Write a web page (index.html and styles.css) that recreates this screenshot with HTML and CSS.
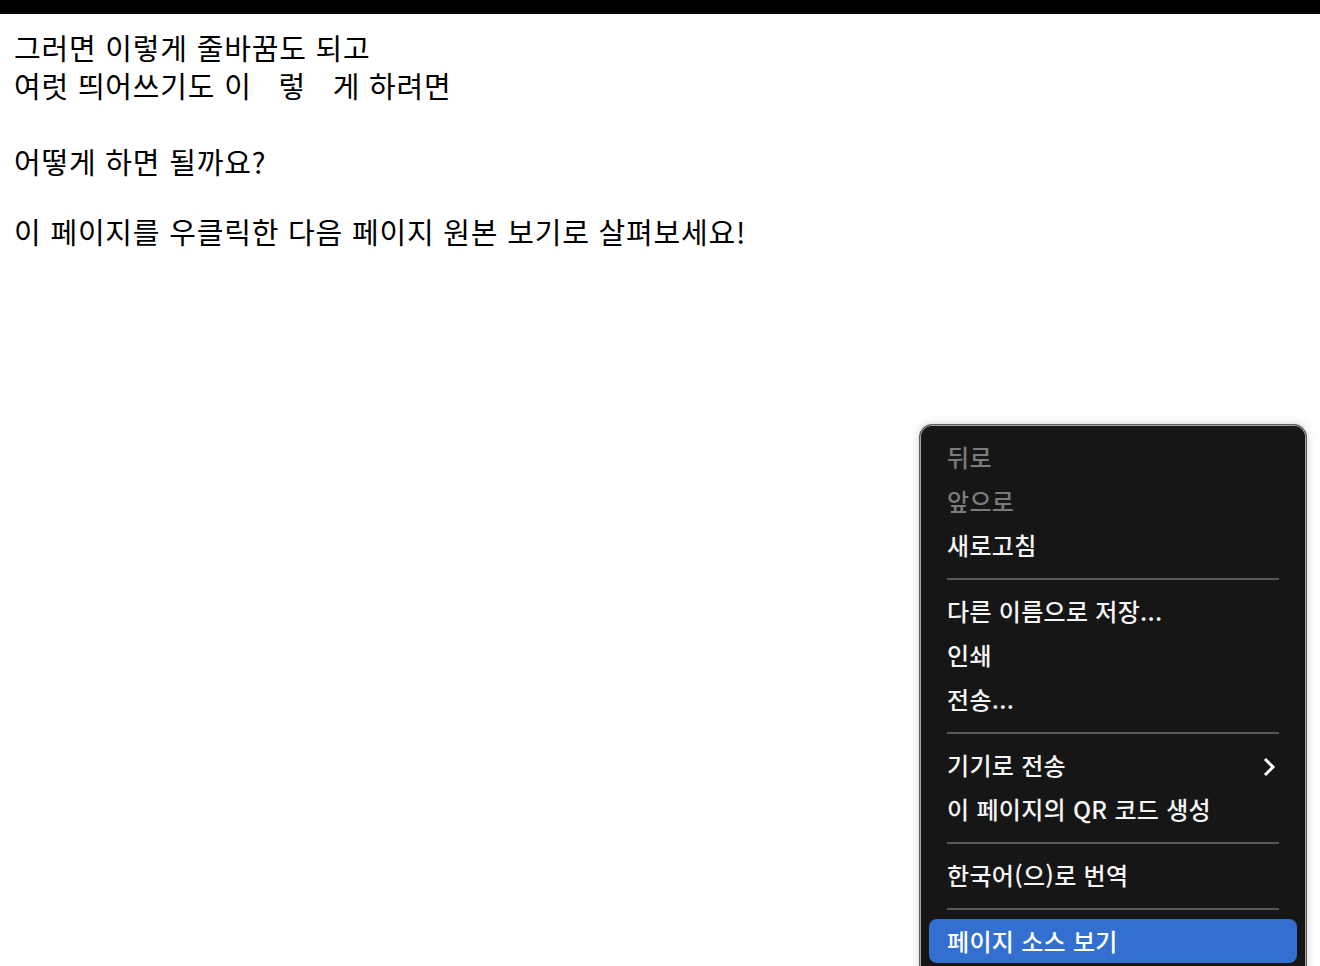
FILE: index.html
```html
<!DOCTYPE html>
<html lang="ko">
<head>
    <meta charset="UTF-8">
    <meta name="viewport" content="width=device-width, initial-scale=1.0">
    <title>줄바꿈과 띄어쓰기</title>
    <link rel="stylesheet" href="styles.css">
</head>
<body>

    <div class="topbar"></div>

    <div class="page">
        <p class="lines">그러면 이렇게 줄바꿈도 되고<br>여럿 띄어쓰기도 이&nbsp;&nbsp;&nbsp;렇&nbsp;&nbsp;&nbsp;게 하려면</p>
        <p class="question">어떻게 하면 될까요?</p>
        <p class="hint">이 페이지를 우클릭한 다음 페이지 원본 보기로 살펴보세요!</p>
    </div>

    <div class="context-menu">
        <div class="menu-item disabled">뒤로</div>
        <div class="menu-item disabled">앞으로</div>
        <div class="menu-item">새로고침</div>
        <div class="menu-sep"></div>
        <div class="menu-item">다른 이름으로 저장...</div>
        <div class="menu-item">인쇄</div>
        <div class="menu-item">전송...</div>
        <div class="menu-sep"></div>
        <div class="menu-item has-sub">기기로 전송
            <svg class="chevron" width="14" height="20" viewBox="0 0 14 20">
                <path d="M3 2 L11 10 L3 18" fill="none" stroke="#fff" stroke-width="3"/>
            </svg>
        </div>
        <div class="menu-item">이 페이지의 QR 코드 생성</div>
        <div class="menu-sep"></div>
        <div class="menu-item">한국어(으)로 번역</div>
        <div class="menu-sep"></div>
        <div class="menu-item active">페이지 소스 보기</div>
    </div>

</body>
</html>
```

FILE: styles.css
```css
html, body {
    height: 100%;
}

body {
    margin: 0;
    font-family: "Noto Sans CJK KR", "Noto Sans", sans-serif;
    color: #000;
    background-color: #fff;
    overflow: hidden;
    position: relative;
}

.topbar {
    height: 14px;
    background-color: #000;
}

.page {
    padding: 14px 14px 0;
    font-size: 29px;
    line-height: 38px;
    letter-spacing: 0.8px;
}

.page p {
    margin: 0;
}

.question {
    margin-top: 38px !important;
}

.hint {
    margin-top: 32px !important;
}

.context-menu {
    position: absolute;
    left: 919px;
    top: 424px;
    width: 386px;
    padding: 10px 0 20px;
    background-color: #161616;
    border: 1px solid #5e5e5e;
    border-radius: 13px;
    box-shadow: inset 0 0 0 1px #a2a2a2, 0 0 10px rgba(0, 0, 0, 0.18);
    font-size: 24px;
    font-weight: 500;
    letter-spacing: 0.3px;
    color: #f4f4f4;
}

.menu-item {
    height: 44px;
    line-height: 44px;
    margin: 0 9px;
    padding: 0 18px;
    border-radius: 8px;
    display: flex;
    align-items: center;
    justify-content: space-between;
    white-space: nowrap;
}

.menu-item.disabled {
    color: #7b7b7b;
}

.menu-item.active {
    background-color: #336fce;
    color: #fff;
}

.chevron {
    margin: 4px 3px 0 0;
}

.menu-sep {
    height: 2px;
    margin: 11px 27px 9px;
    background-color: #585858;
}
```
